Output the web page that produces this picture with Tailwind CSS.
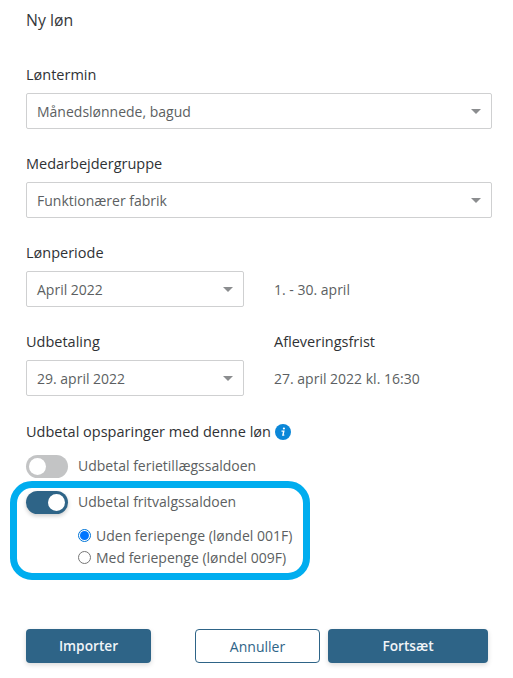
<!doctype html>
<html><head><meta charset="utf-8"><script src="https://cdn.jsdelivr.net/npm/@tailwindcss/browser@4"></script></head>
<body class="bg-white">
<div class="relative w-[513px] h-[678px] overflow-hidden bg-white pl-[26px] font-['Open_Sans',sans-serif] text-[14px] text-[#5c5f62]">
  <div class="h-[20px] pt-[10px] pb-[1px] leading-[20px] text-[15.8px] text-[#35383b] font-medium box-content">Ny løn</div>
  <div class="mt-[34px] leading-[20px] text-[14.5px] text-[#2f3235] font-medium">Løntermin</div>
  <div class="mt-[8px] w-[466px] h-[36px] border border-[#cfd0d1] rounded-[2px] flex items-center justify-between pl-[10px] pr-[10px]"><span>Månedslønnede, bagud</span><div class="w-0 h-0 border-x-[5px] border-x-transparent border-t-[5px] border-t-[#8b8d8f]"></div></div>
  <div class="mt-[25px] leading-[20px] text-[14.5px] text-[#2f3235] font-medium">Medarbejdergruppe</div>
  <div class="mt-[8px] w-[466px] h-[36px] border border-[#cfd0d1] rounded-[2px] flex items-center justify-between pl-[10px] pr-[10px]"><span>Funktionærer fabrik</span><div class="w-0 h-0 border-x-[5px] border-x-transparent border-t-[5px] border-t-[#8b8d8f]"></div></div>
  <div class="mt-[25px] leading-[20px] text-[14.5px] text-[#2f3235] font-medium">Lønperiode</div>
  <div class="mt-[8px] flex items-center">
    <div class="w-[218px] h-[36px] border border-[#cfd0d1] rounded-[2px] flex items-center justify-between pl-[10px] pr-[10px]"><span>April 2022</span><div class="w-0 h-0 border-x-[5px] border-x-transparent border-t-[5px] border-t-[#8b8d8f]"></div></div>
    <span class="ml-[30px]">1. - 30. april</span>
  </div>
  <div class="mt-[25px] flex leading-[20px] text-[14.5px] text-[#2f3235] font-medium"><span class="w-[248px]">Udbetaling</span><span>Afleveringsfrist</span></div>
  <div class="mt-[8px] flex items-center">
    <div class="w-[218px] h-[36px] border border-[#cfd0d1] rounded-[2px] flex items-center justify-between pl-[10px] pr-[10px]"><span>29. april 2022</span><div class="w-0 h-0 border-x-[5px] border-x-transparent border-t-[5px] border-t-[#8b8d8f]"></div></div>
    <span class="ml-[30px]">27. april 2022 kl. 16:30</span>
  </div>
  <div class="mt-[26px] flex items-center leading-[20px] text-[14.5px] text-[#2f3235] font-medium">Udbetal opsparinger med denne løn
    <svg class="ml-[4px]" width="16" height="16" viewBox="0 0 16 16"><circle cx="8" cy="8" r="8" fill="#0b87d8"/><circle cx="8.9" cy="4.5" r="1.1" fill="#fff"/><path d="M6.5 7.1h2.3l-.9 4h1.4" fill="none" stroke="#fff" stroke-width="1.4"/></svg>
  </div>
  <div class="mt-[13px] flex items-center h-[23px]">
    <div class="w-[42px] h-[23px] rounded-full bg-[#c3c4c5] flex items-center pl-[3px]"><div class="w-[17px] h-[17px] rounded-full bg-white"></div></div>
    <span class="ml-[10px] mb-[2px]">Udbetal ferietillægssaldoen</span>
  </div>
  <div class="mt-[13px] flex items-center h-[23px]">
    <div class="w-[42px] h-[23px] rounded-full bg-[#2e6487] flex items-center justify-end pr-[3px] shadow-[0_2px_4px_rgba(0,0,0,0.2)]"><div class="w-[17px] h-[17px] rounded-full bg-white"></div></div>
    <span class="ml-[10px] mb-[2px]">Udbetal fritvalgssaldoen</span>
  </div>
  <div class="mt-[10px] ml-[52px] flex items-center h-[22px]">
    <span class="w-[13px] h-[13px] rounded-full border border-[#0075d8] flex items-center justify-center"><span class="w-[9px] h-[9px] rounded-full bg-[#0075ff]"></span></span>
    <span class="ml-[5px]">Uden feriepenge (løndel 001F)</span>
  </div>
  <div class="ml-[52px] flex items-center h-[22px]">
    <span class="w-[13px] h-[13px] rounded-full border border-[#767676]"></span>
    <span class="ml-[5px]">Med feriepenge (løndel 009F)</span>
  </div>
  <div class="absolute left-[10px] top-[481px] w-[300px] h-[99px] rounded-[22px] border-[7px] border-[#00adef]"></div>
  <div class="absolute left-[26px] right-[25px] top-[629px] flex">
    <button class="w-[125px] h-[34px] rounded-[4px] bg-[#2e6487] text-[#f0f4f7] font-semibold text-[13.7px] shadow-[0_2px_5px_rgba(0,0,0,0.15)]">Importer</button>
    <button class="ml-[44px] w-[125px] h-[34px] rounded-[4px] border border-[#2e6487] text-[#2e6487] font-medium bg-white">Annuller</button>
    <button class="ml-[8px] w-[160px] h-[34px] rounded-[4px] bg-[#2e6487] text-[#f0f4f7] font-semibold text-[13.7px] shadow-[0_2px_5px_rgba(0,0,0,0.15)]">Fortsæt</button>
  </div>
</div>
</body></html>
